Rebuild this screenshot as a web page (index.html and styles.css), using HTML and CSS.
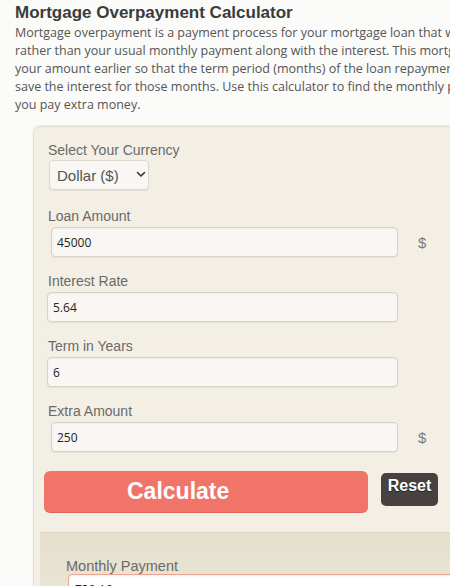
FILE: index.html
```html
<!DOCTYPE html>
<html lang="en">
<head>
<meta charset="utf-8">
<title>Mortgage Overpayment Calculator</title>
<link rel="stylesheet" href="styles.css">
</head>
<body>
<div class="page">
  <h1 class="title">Mortgage Overpayment Calculator</h1>
  <p class="intro">Mortgage overpayment is a payment process for your mortgage loan that will help you pay extra amount<br>rather than your usual monthly payment along with the interest. This mortgage overpayment helps you pay<br>your amount earlier so that the term period (months) of the loan repayment gets reduced and you can<br>save the interest for those months. Use this calculator to find the monthly payment and savings when<br>you pay extra money.</p>

  <div class="calc">
    <div class="field first">
      <label class="lbl">Select Your Currency</label>
      <div class="select-wrap">
        <select class="sel"><option>Dollar ($)</option></select>
        <svg class="chev" width="10" height="7" viewBox="0 0 10 7"><path d="M1.5 1.5 L5 5 L8.5 1.5" fill="none" stroke="#333" stroke-width="1.6" stroke-linecap="round" stroke-linejoin="round"/></svg>
      </div>
    </div>

    <div class="field">
      <label class="lbl">Loan Amount</label>
      <div class="row">
        <input class="inp inp-unit" type="text" value="45000">
        <span class="unit">$</span>
      </div>
    </div>

    <div class="field">
      <label class="lbl">Interest Rate</label>
      <div class="row">
        <input class="inp" type="text" value="5.64">
      </div>
    </div>

    <div class="field">
      <label class="lbl">Term in Years</label>
      <div class="row">
        <input class="inp" type="text" value="6">
      </div>
    </div>

    <div class="field">
      <label class="lbl">Extra Amount</label>
      <div class="row">
        <input class="inp inp-unit" type="text" value="250">
        <span class="unit">$</span>
      </div>
    </div>

    <div class="actions">
      <button class="btn-calc" type="button">Calculate</button>
      <button class="btn-reset" type="button">Reset</button>
    </div>

    <div class="result">
      <label class="res-lbl">Monthly Payment</label>
      <input class="res-inp" type="text" value="730.16">
    </div>
  </div>
</div>
</body>
</html>
```

FILE: styles.css
```css
html, body {
  margin: 0;
  padding: 0;
  overflow: hidden;
  background: #fbfbf9;
}

.page {
  width: 640px;
  padding-left: 15px;
  font-family: "Liberation Sans", Arial, sans-serif;
}

.title {
  margin: 3px 0 0 0;
  font-size: 17px;
  line-height: 20px;
  font-weight: bold;
  color: #3b3b3b;
}

.intro {
  margin: 1px 0 0 0;
  font-family: "Open Sans", sans-serif;
  font-size: 12.5px;
  line-height: 18px;
  color: #555;
  white-space: nowrap;
}

.calc {
  margin: 12px 0 0 18px;
  width: 580px;
  background: #f3efe4;
  border: 1px solid #e3ddcd;
  border-radius: 7px;
  box-shadow: 0 -1px 2px rgba(0,0,0,0.06);
  padding: 15px 0 0 13px;
  height: 600px;
}

.field {
  margin-top: 16px;
}
.field.first {
  margin-top: 0;
}
.field:nth-child(2) {
  margin-top: 18px;
}

.lbl {
  display: block;
  font-size: 14px;
  line-height: 16px;
  color: #6a6a6a;
  padding-left: 1px;
  margin-bottom: 3px;
}
.field.first .lbl {
  margin-bottom: 2px;
}

.select-wrap {
  position: relative;
  margin-left: 2px;
  width: 100px;
  height: 30px;
}

.sel {
  appearance: none;
  -webkit-appearance: none;
  width: 100px;
  height: 30px;
  box-sizing: border-box;
  border: 1px solid #dcd8cd;
  border-radius: 4px;
  background: #f8f7f3;
  box-shadow: 0 1px 1px rgba(0,0,0,0.06);
  font-family: "Liberation Sans", Arial, sans-serif;
  font-size: 15px;
  color: #555;
  padding: 0 0 0 7px;
  margin: 0;
}

.chev {
  position: absolute;
  left: 87px;
  top: 11px;
}

.row {
  display: flex;
  align-items: center;
}

.inp {
  box-sizing: border-box;
  width: 351px;
  height: 30px;
  margin: 0;
  border: 1px solid #d6d2c7;
  border-radius: 4px;
  background: #f8f7f3;
  box-shadow: inset 0 1px 2px rgba(0,0,0,0.05), 0 1px 1px rgba(0,0,0,0.05);
  font-family: "Open Sans", sans-serif;
  font-size: 12px;
  color: #222;
  padding: 0 0 0 5px;
}

.inp-unit {
  width: 347px;
  margin-left: 4px;
}

.unit {
  margin-left: 20px;
  font-family: "Liberation Sans", Arial, sans-serif;
  font-size: 15px;
  color: #7a7a7a;
}

.actions {
  display: flex;
  align-items: flex-start;
  margin-top: 19px;
  margin-left: -3px;
}

.btn-calc {
  width: 324px;
  height: 41px;
  border: none;
  border-radius: 6px;
  background: #f07468;
  box-shadow: 0 1px 0 #e0635a;
  color: #fff;
  font-family: "Liberation Sans", Arial, sans-serif;
  font-weight: bold;
  font-size: 23px;
  text-align: left;
  padding: 0 0 0 83px;
  margin: 0;
}

.btn-reset {
  margin: 2px 0 0 13px;
  width: 57px;
  height: 33px;
  border: none;
  border-radius: 5px;
  background: #47423f;
  color: #fff;
  font-family: "Liberation Sans", Arial, sans-serif;
  font-weight: bold;
  font-size: 16px;
  text-shadow: 0 1px 1px rgba(0,0,0,0.5);
  padding: 0 0 8px 0;
}

.result {
  margin: 20px 0 0 -7px;
  width: 600px;
  height: 120px;
  background: linear-gradient(#e6e0cd, #efeadd);
  border-top: 1px solid #dcd5c1;
  padding: 25px 0 0 26px;
}

.res-lbl {
  display: block;
  font-size: 14.5px;
  line-height: 16px;
  color: #6a6a6a;
}

.res-inp {
  box-sizing: border-box;
  display: block;
  margin: 0 0 0 2px;
  width: 450px;
  height: 30px;
  border: 1px solid #eda493;
  border-radius: 4px;
  background: #fff;
  box-shadow: inset 0 1px 2px rgba(0,0,0,0.08);
  font-family: "Open Sans", sans-serif;
  font-size: 12px;
  color: #222;
  padding: 0 0 0 6px;
}
```
